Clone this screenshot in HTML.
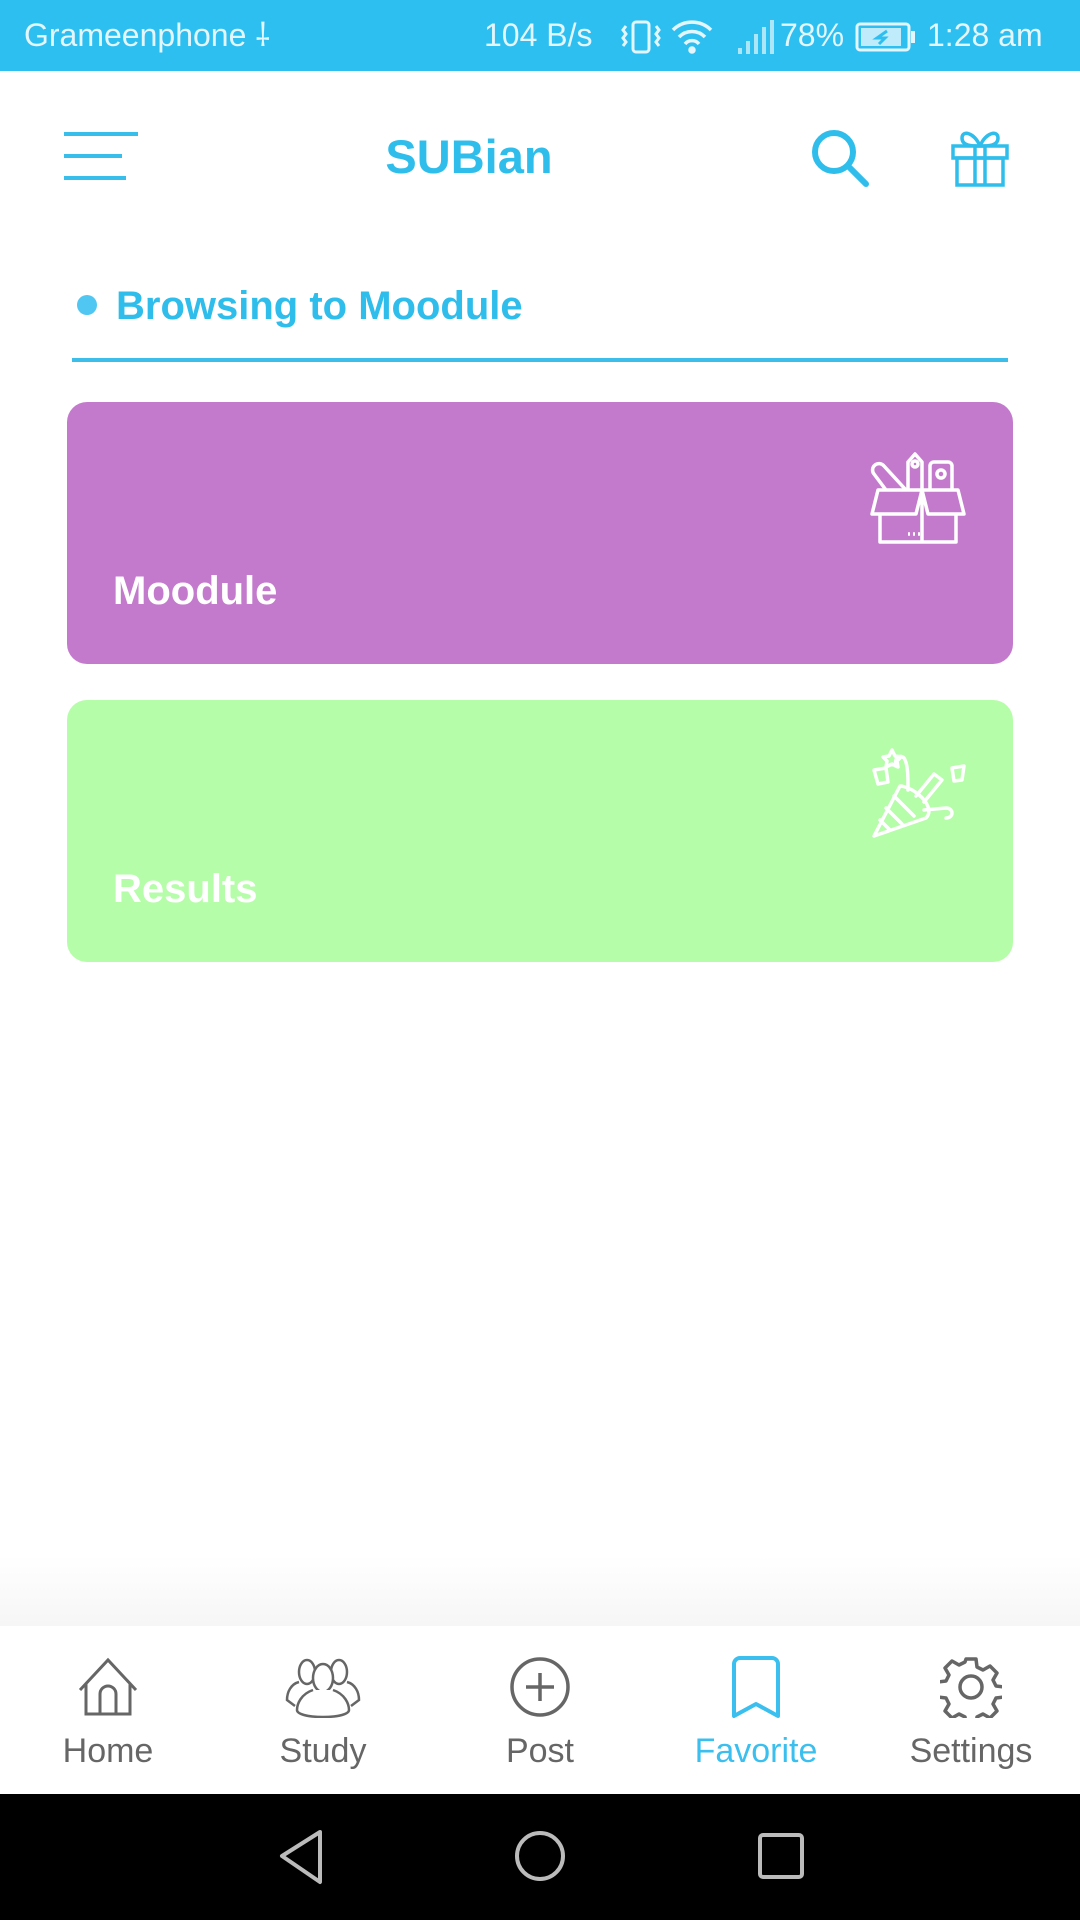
<!DOCTYPE html>
<html><head><meta charset="utf-8"><style>
*{margin:0;padding:0;box-sizing:border-box}
body{width:1080px;height:1920px;position:relative;background:#fff;font-family:"Liberation Sans",Roboto,sans-serif;overflow:hidden}
.abs{position:absolute}
.sb{left:0;top:0;width:1080px;height:71px;background:#2EBFF1;color:#E3F6FD;font-size:32px}
.sb span{position:absolute;top:17px;line-height:36px}
.card{position:absolute;left:67px;width:946px;height:262px;border-radius:20px}
.card .t{position:absolute;left:46px;bottom:50px;color:#fff;font-weight:bold;font-size:40px}
.nav{left:0;top:1626px;width:1080px;height:168px;background:#fff}
.it{position:absolute;top:1656px;width:200px;margin-left:-100px;text-align:center;color:#666;font-size:34px}
.it svg{display:block;margin:0 auto 14px}
</style></head><body>
<div class="abs sb">
<span style="left:24px">Grameenphone ⸸</span>
<span style="left:484px">104 B/s</span>
<svg class="abs" style="left:618px;top:20px" width="48" height="34" viewBox="0 0 48 34" fill="none" stroke="#E3F6FD" stroke-width="3"><rect x="15" y="2" width="16" height="30" rx="3"/><path d="M8 6l-3 4 3 4-3 4 3 4-3 4M38 6l3 4-3 4 3 4-3 4 3 4"/></svg>
<svg class="abs" style="left:670px;top:18px" width="44" height="36" viewBox="0 0 44 36" fill="none" stroke="#E3F6FD" stroke-width="3.5"><path d="M3 12a27 27 0 0 1 38 0M9 19a18 18 0 0 1 26 0M15 26a9 9 0 0 1 14 0"/><circle cx="22" cy="32" r="2" fill="#E3F6FD"/></svg>
<svg class="abs" style="left:736px;top:20px" width="40" height="34" viewBox="0 0 40 34" fill="#E3F6FD" opacity=".7"><rect x="2" y="28" width="4" height="6"/><rect x="10" y="21" width="4" height="13"/><rect x="18" y="14" width="4" height="20"/><rect x="26" y="7" width="4" height="27"/><rect x="34" y="0" width="4" height="34"/></svg>
<span style="left:780px">78%</span>
<svg class="abs" style="left:855px;top:22px" width="62" height="30" viewBox="0 0 62 30"><rect x="2" y="2" width="52" height="26" rx="3" fill="none" stroke="#E3F6FD" stroke-width="3"/><rect x="6" y="6" width="40" height="18" fill="#E3F6FD" opacity=".8"/><rect x="56" y="9" width="4" height="12" fill="#E3F6FD"/><path d="M32 9l-10 7h8l-6 6" stroke="#2EBFF1" stroke-width="3" fill="none"/></svg>
<span style="left:927px">1:28 am</span>
</div>
<svg class="abs" style="left:64px;top:130px" width="76" height="54" viewBox="0 0 76 54" stroke="#37BEEB" stroke-width="4"><path d="M0 4h74M0 26h58M0 48h62"/></svg>
<div class="abs" style="left:369px;top:128px;width:200px;text-align:center;color:#2FBDEC;font-weight:bold;font-size:47px;line-height:58px">SUBian</div>
<svg class="abs" style="left:810px;top:128px" width="62" height="60" viewBox="0 0 62 60" fill="none" stroke="#2FBDEC" stroke-width="6" stroke-linecap="round"><circle cx="24" cy="24" r="19"/><path d="M38 38l18 18"/></svg>
<svg class="abs" style="left:950px;top:126px" width="60" height="62" viewBox="0 0 60 62" fill="none" stroke="#2FBDEC" stroke-width="3.5"><rect x="3" y="20" width="54" height="12"/><rect x="7" y="32" width="46" height="27"/><path d="M25 20v39M35 20v39M30 20c-6-14-18-16-18-8s10 8 18 8c6-14 18-16 18-8s-10 8-18 8"/></svg>
<div class="abs" style="left:77px;top:295px;width:20px;height:20px;border-radius:50%;background:#4FC7F2"></div>
<div class="abs" style="left:116px;top:283px;color:#2FBDEC;font-weight:bold;font-size:40px;line-height:46px">Browsing to Moodule</div>
<div class="abs" style="left:72px;top:358px;width:936px;height:4px;background:#3CBDEA"></div>
<div class="card" style="top:402px;background:#C47ACC"><div class="t">Moodule</div>
<svg class="abs" style="left:803px;top:50px" width="96" height="92" viewBox="0 0 96 92" fill="none" stroke="#fff" stroke-width="3.5" stroke-linejoin="round"><path d="M8 38L2 62h44l6-24zM52 38l6 24h36l-6-24zM10 62v28h42V38M52 90h34V62"/><path d="M16 38L4 22a6 6 0 0 1 10-8l22 24M38 38V10l7-8 7 8v28M60 38V14a4 4 0 0 1 4-4h14a4 4 0 0 1 4 4v24"/><circle cx="45" cy="12" r="3"/><circle cx="71" cy="22" r="4"/><path d="M38 82h2M43 82h2M48 82h2"/></svg></div>
<div class="card" style="top:700px;background:#B5FDA9"><div class="t">Results</div>
<svg class="abs" style="left:803px;top:46px" width="96" height="92" viewBox="0 0 96 92" fill="none" stroke="#fff" stroke-width="3.5" stroke-linecap="round" stroke-linejoin="round"><path d="M22 4l3 6 6 1-4 4 1 6-6-3-6 3 1-6-4-4 6-1z"/><path d="M4 24l12-2 2 14-10 2zM82 22l12-2-2 14-8 1z"/><path d="M30 40L4 90l52-18c6-6 2-16-8-24s-18-8-18-8z"/><path d="M16 62l16 16M10 74l10 10M24 50l20 20M46 50l18-22 8 6-18 22M54 64l22-2c8 0 8 10 0 10M38 44c0-14 0-26-4-32-4-4-10 0-8 6"/></svg></div>
<div class="abs" style="left:0;top:1555px;width:1080px;height:71px;background:linear-gradient(#fff,#f6f6f6)"></div>
<div class="abs nav"></div>
<div class="it" style="left:108px"><svg width="60" height="62" viewBox="0 0 60 62" fill="none" stroke="#666" stroke-width="3"><path d="M2 34L30 4l28 30M8 28v30h44V28M22 58V38a8 8 0 0 1 16 0v20"/></svg>Home</div>
<div class="it" style="left:323px"><svg width="76" height="62" viewBox="0 0 76 62" fill="none" stroke="#666" stroke-width="2.5"><ellipse cx="22" cy="16" rx="8" ry="12"/><ellipse cx="54" cy="16" rx="8" ry="12"/><path d="M14 26c-8 2-12 10-12 18l8 6M62 26c8 2 12 10 12 18l-8 6"/><ellipse cx="38" cy="22" rx="10" ry="14" fill="#fff"/><path d="M28 34c-12 4-16 14-16 20 0 4 10 7 26 7s26-3 26-7c0-6-4-16-16-20" fill="#fff"/></svg>Study</div>
<div class="it" style="left:540px"><svg width="62" height="62" viewBox="0 0 62 62" fill="none" stroke="#666" stroke-width="3.5"><circle cx="31" cy="31" r="28"/><path d="M31 17v28M17 31h28"/></svg>Post</div>
<div class="it" style="left:756px;color:#3BBFEF"><svg width="50" height="62" viewBox="0 0 50 62" fill="none" stroke="#3BBFEF" stroke-width="4" stroke-linejoin="round"><path d="M3 8a6 6 0 0 1 6-6h32a6 6 0 0 1 6 6v52L25 48 3 60z"/></svg>Favorite</div>
<div class="it" style="left:971px"><svg width="62" height="62" viewBox="0 0 62 62" fill="none" stroke="#666" stroke-width="3.5" stroke-linejoin="round"><path d="M26 3h10l1 8 6 3 7-4 7 7-4 7 3 6 8 1v10l-8 1-3 6 4 7-7 7-7-4-6 3-1 8H26l-1-8-6-3-7 4-7-7 4-7-3-6-8-1V26l8-1 3-6-4-7 7-7 7 4 6-3z"/><circle cx="31" cy="31" r="11"/></svg>Settings</div>
<div class="abs" style="left:0;top:1794px;width:1080px;height:126px;background:#000"></div>
<svg class="abs" style="left:270px;top:1826px" width="560" height="62" viewBox="0 0 560 62" fill="none" stroke="#bbb" stroke-width="4" stroke-linejoin="round"><path d="M50 6L12 30l38 26z"/><circle cx="270" cy="30" r="23"/><rect x="490" y="9" width="42" height="42" rx="3"/></svg>
</body></html>
